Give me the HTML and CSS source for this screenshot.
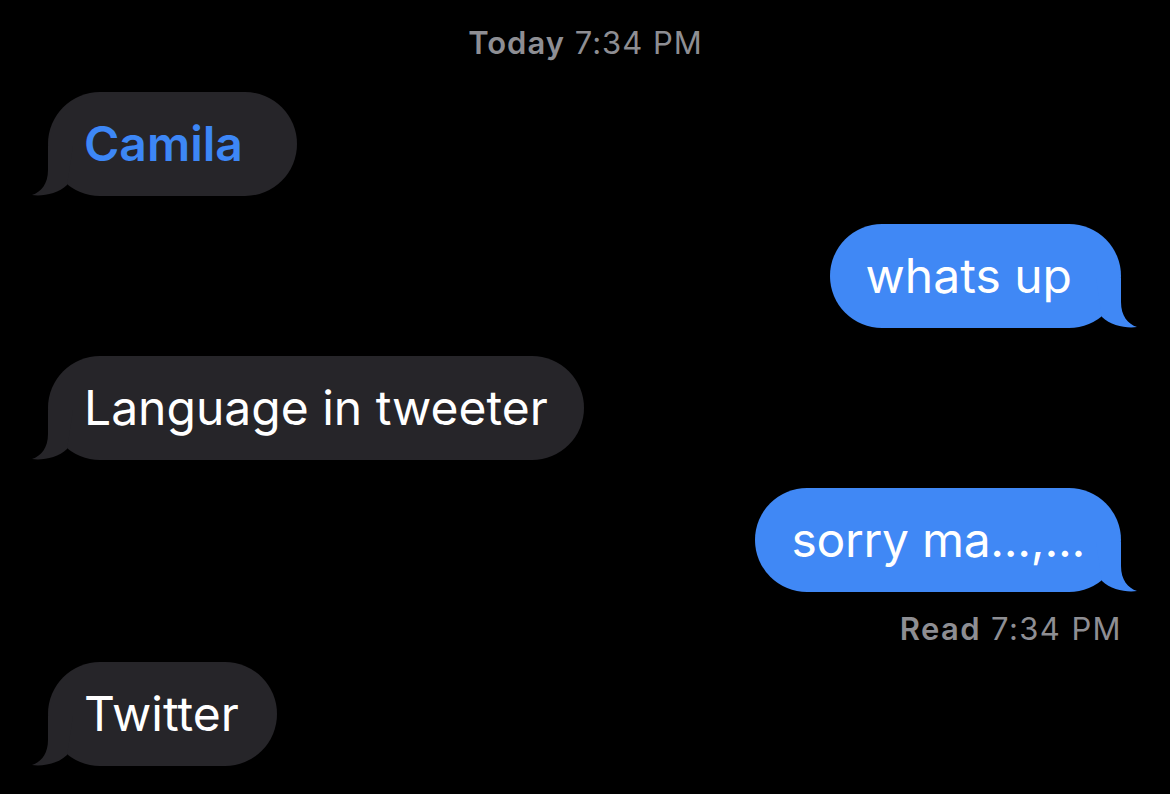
FILE: index.html
```html
<!DOCTYPE html>
<html lang="en">
<head>
<meta charset="utf-8">
<title>Messages</title>
<link rel="stylesheet" href="styles.css">
</head>
<body>
<main class="thread">
  <div class="stamp"><b>Today</b> 7:34 PM</div>

  <div class="bubble in trail name">Camila
    <svg class="tail" viewBox="0 0 60 60" width="60" height="60"><path d="M20 10 L20 34 C20 48 13 56 4 59 C14 60.5 30 58 39 49 L45 10 Z"/></svg>
  </div>

  <div class="bubble out trail">whats up
    <svg class="tail" viewBox="0 0 60 60" width="60" height="60"><path d="M20 10 L20 34 C20 48 13 56 4 59 C14 60.5 30 58 39 49 L45 10 Z"/></svg>
  </div>

  <div class="bubble in">Language in tweeter
    <svg class="tail" viewBox="0 0 60 60" width="60" height="60"><path d="M20 10 L20 34 C20 48 13 56 4 59 C14 60.5 30 58 39 49 L45 10 Z"/></svg>
  </div>

  <div class="bubble out tight">sorry ma...,...
    <svg class="tail" viewBox="0 0 60 60" width="60" height="60"><path d="M20 10 L20 34 C20 48 13 56 4 59 C14 60.5 30 58 39 49 L45 10 Z"/></svg>
  </div>
  <div class="receipt"><b>Read</b> 7:34 PM</div>

  <div class="bubble in last">Twitter
    <svg class="tail" viewBox="0 0 60 60" width="60" height="60"><path d="M20 10 L20 34 C20 48 13 56 4 59 C14 60.5 30 58 39 49 L45 10 Z"/></svg>
  </div>
</main>
</body>
</html>
```

FILE: styles.css
```css
html, body {
  margin: 0;
  padding: 0;
  background: #000;
}

body {
  width: 1170px;
  height: 794px;
  overflow: hidden;
  font-family: Inter, "Noto Sans", "Liberation Sans", sans-serif;
}

.thread {
  display: flex;
  flex-direction: column;
  padding: 25px 49px 0 48px;
}

.stamp,
.receipt {
  font-size: 31px;
  line-height: 36px;
  color: #8e8e93;
  letter-spacing: 1px;
}

.stamp b,
.receipt b {
  font-weight: 600;
}

.stamp {
  align-self: center;
  margin-bottom: 31px;
  margin-left: 2px;
}

.receipt {
  align-self: flex-end;
  margin-top: 19px;
  margin-bottom: 15px;
  margin-right: -1px;
  letter-spacing: 1.4px;
}

.bubble {
  position: relative;
  font-size: 48px;
  line-height: 60px;
  padding: 22px 36px 22px 36px;
  border-radius: 52px;
  color: #fff;
  letter-spacing: 0;
  margin-bottom: 28px;
}

.bubble .tail {
  position: absolute;
  bottom: 0;
  display: block;
}

.in {
  align-self: flex-start;
  background: #262529;
}

.in .tail {
  left: -20px;
  fill: #262529;
}

.out {
  align-self: flex-end;
  background: #4088f5;
}

.out .tail {
  right: -20px;
  fill: #4088f5;
  transform: scaleX(-1);
}

.out + .receipt {
  margin-top: -9px;
}

.trail {
  padding-right: 49px;
}

.tight {
  letter-spacing: -0.3px;
}

.name {
  color: #3d87f6;
  font-weight: 600;
  padding-right: 54px;
}

.last {
  margin-bottom: 0;
  padding-right: 38px;
}
```
